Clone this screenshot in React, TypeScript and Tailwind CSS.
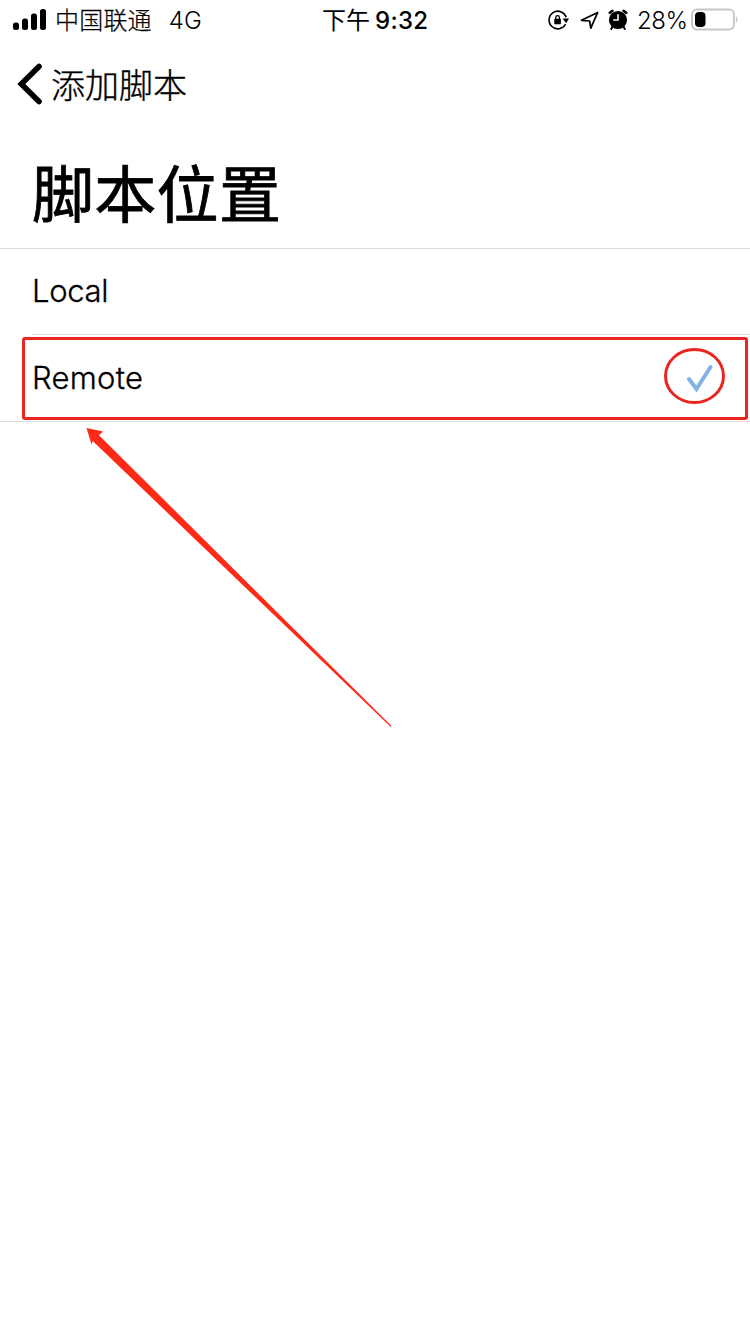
import React from 'react';

const cjk = "font-['Inter','Noto_Sans_CJK_SC',sans-serif]";

function StatusBar() {
  return (
    <header className="flex h-10 shrink-0 items-center whitespace-nowrap text-[24px] leading-10 text-black">
      <div className="flex w-[322px] items-center pl-[13px]">
        <svg width="33" height="22" viewBox="0 0 33 22" className="shrink-0">
          <rect x="0" y="13.5" width="6" height="7.5" rx="2.5" />
          <rect x="9" y="9.5" width="6" height="11.5" rx="2.5" />
          <rect x="18" y="4.5" width="6" height="16.5" rx="2.5" />
          <rect x="27" y="0" width="6" height="21" rx="2.5" />
        </svg>
        <span className="ml-[9px] pt-[2px] font-light tracking-[0.2px] [-webkit-text-stroke:0.25px_black]">中国联通</span>
        <span className="ml-[17px] pt-[2px] text-[24px] font-light">4G</span>
      </div>
      <div className="flex w-[225px] items-center pt-[2px]">
        <span>下午</span>
        <span className="ml-[5px] font-medium tracking-[0.3px]">9:32</span>
      </div>
      <div className="flex items-center">
        <svg width="22" height="22" viewBox="0 0 22 22" fill="none" stroke="#000" className="shrink-0">
          <path d="M19.2 8.2A8.8 8.8 0 1 0 18.6 15.2" strokeWidth="1.6" />
          <path d="M15.6 9.6h6.4l-2.8 4.6z" fill="#000" stroke="none" />
          <rect x="7.3" y="9.7" width="6.6" height="5.6" rx="0.6" fill="#000" stroke="none" />
          <path d="M8.8 10V8.4a1.8 1.8 0 0 1 3.6 0V10" strokeWidth="1.3" />
        </svg>
        <svg width="20" height="20" viewBox="0 0 20 20" fill="none" stroke="#000" strokeWidth="1.7" strokeLinejoin="round" className="ml-[11px] shrink-0">
          <path d="M1.5 10.3 17.7 2.4 10.8 18.2 9.6 11z" />
        </svg>
        <svg width="20" height="22" viewBox="0 0 20 22" className="ml-[8px] shrink-0">
          <circle cx="10" cy="11" r="9.1" />
          <path d="M1.8 3.8 4.4 1.8M18.2 3.8 15.6 1.8" stroke="#000" strokeWidth="2.6" strokeLinecap="round" />
          <path d="M4.6 17.5 3.2 20M15.4 17.5 16.8 20" stroke="#000" strokeWidth="2" strokeLinecap="round" />
          <path d="M10 5.2v5.8H5.2" fill="none" stroke="#fff" strokeWidth="1.6" />
        </svg>
        <span className="ml-[9px] w-[49px] pt-[2px] text-[24px] font-light tracking-[-0.4px]">28%</span>
        <svg width="49" height="24" viewBox="0 0 49 24" className="ml-[4px] shrink-0">
          <rect x="2" y="1.5" width="42" height="20" rx="5" fill="none" stroke="#c7c7c7" strokeWidth="2" />
          <rect x="5" y="4" width="10.5" height="15" rx="4" />
          <path d="M46 8q3 3.5 0 7z" fill="#c7c7c7" />
        </svg>
      </div>
    </header>
  );
}

function Annotations() {
  return (
    <svg className="pointer-events-none absolute left-0 top-0" width="750" height="1334" viewBox="0 0 750 1334" fill="none">
      <rect x="23.5" y="338.5" width="723" height="80" rx="1.5" stroke="#e8261f" strokeWidth="3" />
      <ellipse cx="694.5" cy="376" rx="29" ry="26.5" stroke="#e8261f" strokeWidth="3" />
      <path d="M86.5 428 103 431.5 99 435.2 391.3 725.8 390.5 726.8 92.7 441 91.5 444.5z" fill="#fd2a18" />
    </svg>
  );
}

export default function App() {
  return (
    <main className={`relative flex h-[1334px] w-[750px] flex-col overflow-hidden bg-white text-black ${cjk}`}>
      <StatusBar />
      <nav className="flex h-[88px] items-center pl-[17px]">
        <svg width="26" height="42" viewBox="0 0 26 42" fill="none" stroke="#000" strokeWidth="5.6" strokeLinecap="round" strokeLinejoin="miter">
          <path d="M22 3.5 4.3 21l17.7 17.5" />
        </svg>
        <span className="ml-[8px] pt-[2px] text-[34px] font-light [-webkit-text-stroke:0.4px_black]">添加脚本</span>
      </nav>
      <div className="flex h-[121px] items-center border-b border-[#dedee0] pl-[32px] pt-[15px]">
        <h1 className="text-[62px] font-normal leading-none tracking-[0.3px] [-webkit-text-stroke:0.8px_black]">脚本位置</h1>
      </div>
      <ul>
        <li className="pl-8">
          <div className="flex h-[86px] items-center border-b border-[#dedee0] text-[31px] font-[350] tracking-[-0.3px] [-webkit-text-stroke:0.3px_black]">Local</div>
        </li>
        <li className="flex h-[87px] items-center justify-between border-b border-[#dedee0] pl-8 pr-[37px] text-[31px] font-[350] [-webkit-text-stroke:0.3px_black]">
          <span className="tracking-[0.25px]">Remote</span>
          <svg width="27" height="28" viewBox="0 0 27 28" fill="none" stroke="#84b2e6" strokeWidth="4" className="shrink-0">
            <path d="M3 15 10.5 25 24.5 3" strokeLinecap="round" />
          </svg>
        </li>
      </ul>
      <Annotations />
    </main>
  );
}
